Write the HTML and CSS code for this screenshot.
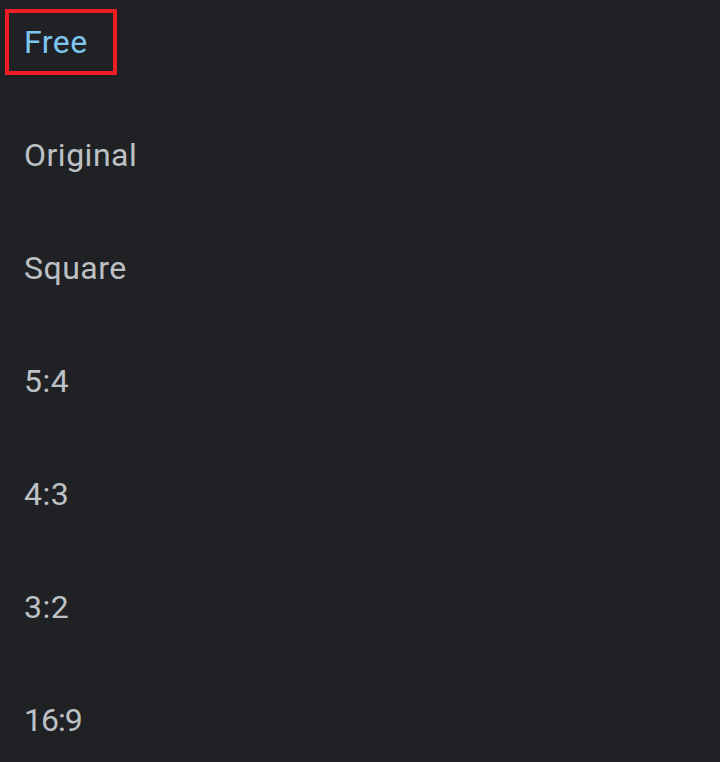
FILE: index.html
```html
<!DOCTYPE html>
<html lang="en">
<head>
<meta charset="utf-8">
<title>Aspect ratio</title>
<link rel="stylesheet" href="styles.css">
</head>
<body>
  <ul class="list">
    <li class="item"><span class="label selected">Free</span></li>
    <li class="item"><span class="label">Original</span></li>
    <li class="item"><span class="label">Square</span></li>
    <li class="item"><span class="label">5:4</span></li>
    <li class="item"><span class="label">4:3</span></li>
    <li class="item"><span class="label">3:2</span></li>
    <li class="item"><span class="label num">16:9</span></li>
  </ul>
</body>
</html>
```
FILE: styles.css
```css
html, body {
  margin: 0;
  padding: 0;
  background: #202124;
}
body {
  height: 762px;
  overflow: hidden;
  font-family: Roboto, "Noto Sans", sans-serif;
}
.list {
  list-style: none;
  margin: 0;
  padding: 22px 0 0 0;
}
.item {
  height: 113px;
  padding-left: 24px;
  box-sizing: border-box;
}
.item:last-child {
  height: auto;
}
.label {
  display: inline-block;
  font-size: 32px;
  line-height: 40px;
  letter-spacing: 0.5px;
  color: #bdc1c6;
  position: relative;
}
.label.num {
  letter-spacing: -1px;
}
.label.selected {
  color: #7cc6f0;
}
.label.selected::after {
  content: "";
  position: absolute;
  left: -19px;
  top: -13px;
  width: 112px;
  height: 66px;
  box-sizing: border-box;
  border: 4.5px solid #ee1c25;
}
```
